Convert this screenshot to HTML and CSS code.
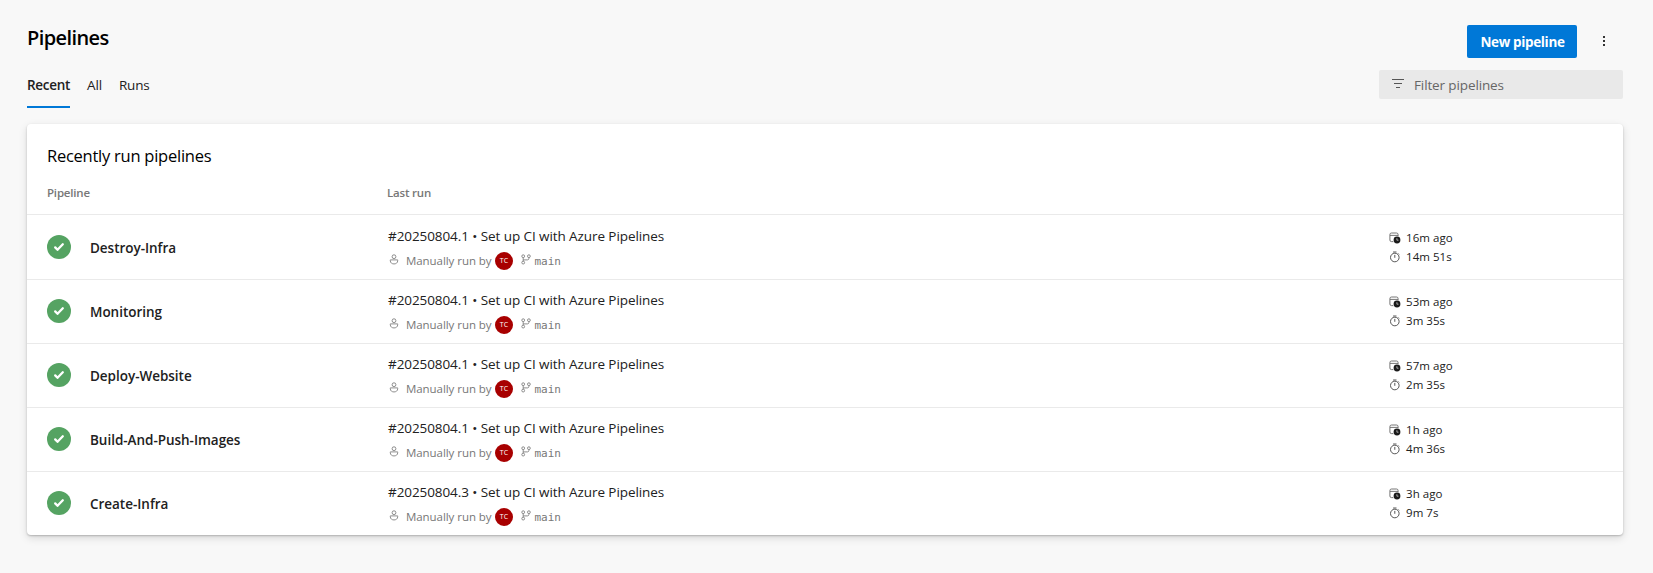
FILE: index.html
```html
<!DOCTYPE html>
<html lang="en">
<head>
<meta charset="utf-8">
<title>Pipelines</title>
<link rel="stylesheet" href="styles.css">
</head>
<body>
<svg class="sprite" width="0" height="0">
  <symbol id="check" viewBox="0 0 24 24"><circle cx="12" cy="12" r="12" fill="#55a362"/><path d="M8.2 12.4l2.3 2.4 5.3-5.5" fill="none" stroke="#fff" stroke-width="2.3" stroke-linecap="round" stroke-linejoin="round"/></symbol>
  <symbol id="person" viewBox="0 0 10 11"><g fill="none" stroke="#808080" stroke-width=".9"><circle cx="5" cy="2.7" r="1.9"/><path d="M1.3 5.9h7.4v.9c0 4.2-7.4 4.2-7.4 0z"/></g></symbol>
  <symbol id="branch" viewBox="0 0 10 11"><g fill="none" stroke="#808080" stroke-width=".9"><circle cx="2.2" cy="2.2" r="1.4"/><circle cx="7.9" cy="2.2" r="1.4"/><circle cx="2.2" cy="8.6" r="1.4"/><path d="M2.2 3.6v3.6M7.9 3.6v.8c0 1-.6 1.5-1.5 1.5H2.2"/></g></symbol>
  <symbol id="calendar" viewBox="0 0 12 12"><rect x=".9" y="1" width="8.2" height="8.6" rx="1.6" fill="none" stroke="#666" stroke-width=".9"/><path d="M1 3.4h8" stroke="#666" stroke-width=".9"/><circle cx="8" cy="8" r="4" fill="#fff"/><circle cx="8" cy="8" r="3.4" fill="#1b1b1b"/><path d="M7.9 6.2v2h1.6" fill="none" stroke="#fff" stroke-width=".6"/></symbol>
  <symbol id="timer" viewBox="0 0 12 12"><g fill="none" stroke="#444" stroke-width=".9"><circle cx="5.8" cy="6.5" r="4.3"/><path d="M4.1 1h3.4M5.8 3.9v2.9M9.1 2.4l1 1"/></g></symbol>
</svg>
<main class="page">
  <header class="top">
    <h1>Pipelines</h1>
    <button class="primary">New pipeline</button>
    <button class="more" aria-label="More"><i></i><i></i><i></i></button>
  </header>
  <div class="bar">
    <nav class="tabs"><a class="tab active">Recent</a><a class="tab">All</a><a class="tab">Runs</a></nav>
    <div class="filter"><svg width="12" height="10" viewBox="0 0 12 10"><path d="M0 .5h12M2 4.5h8M4 8.5h4" stroke="#555" stroke-width="1"/></svg><span>Filter pipelines</span></div>
  </div>
  <section class="card">
    <h2>Recently run pipelines</h2>
    <div class="head"><span class="col-name">Pipeline</span><span>Last run</span></div>
    <div class="row first">
      <div class="name"><svg width="24" height="24"><use href="#check"/></svg><span>Destroy-Infra</span></div>
      <div class="run"><div class="title">#20250804.1 • Set up CI with Azure Pipelines</div><div class="meta"><svg class="person" width="10" height="11"><use href="#person"/></svg><span class="by">Manually run by</span><span class="avatar">TC</span><svg class="branch" width="10" height="11"><use href="#branch"/></svg><span class="ref">main</span></div></div>
      <div class="times"><div><svg width="12" height="12"><use href="#calendar"/></svg>16m ago</div><div><svg width="12" height="12"><use href="#timer"/></svg>14m 51s</div></div>
    </div>
    <div class="row">
      <div class="name"><svg width="24" height="24"><use href="#check"/></svg><span>Monitoring</span></div>
      <div class="run"><div class="title">#20250804.1 • Set up CI with Azure Pipelines</div><div class="meta"><svg class="person" width="10" height="11"><use href="#person"/></svg><span class="by">Manually run by</span><span class="avatar">TC</span><svg class="branch" width="10" height="11"><use href="#branch"/></svg><span class="ref">main</span></div></div>
      <div class="times"><div><svg width="12" height="12"><use href="#calendar"/></svg>53m ago</div><div><svg width="12" height="12"><use href="#timer"/></svg>3m 35s</div></div>
    </div>
    <div class="row">
      <div class="name"><svg width="24" height="24"><use href="#check"/></svg><span>Deploy-Website</span></div>
      <div class="run"><div class="title">#20250804.1 • Set up CI with Azure Pipelines</div><div class="meta"><svg class="person" width="10" height="11"><use href="#person"/></svg><span class="by">Manually run by</span><span class="avatar">TC</span><svg class="branch" width="10" height="11"><use href="#branch"/></svg><span class="ref">main</span></div></div>
      <div class="times"><div><svg width="12" height="12"><use href="#calendar"/></svg>57m ago</div><div><svg width="12" height="12"><use href="#timer"/></svg>2m 35s</div></div>
    </div>
    <div class="row">
      <div class="name"><svg width="24" height="24"><use href="#check"/></svg><span>Build-And-Push-Images</span></div>
      <div class="run"><div class="title">#20250804.1 • Set up CI with Azure Pipelines</div><div class="meta"><svg class="person" width="10" height="11"><use href="#person"/></svg><span class="by">Manually run by</span><span class="avatar">TC</span><svg class="branch" width="10" height="11"><use href="#branch"/></svg><span class="ref">main</span></div></div>
      <div class="times"><div><svg width="12" height="12"><use href="#calendar"/></svg>1h ago</div><div><svg width="12" height="12"><use href="#timer"/></svg>4m 36s</div></div>
    </div>
    <div class="row">
      <div class="name"><svg width="24" height="24"><use href="#check"/></svg><span>Create-Infra</span></div>
      <div class="run"><div class="title">#20250804.3 • Set up CI with Azure Pipelines</div><div class="meta"><svg class="person" width="10" height="11"><use href="#person"/></svg><span class="by">Manually run by</span><span class="avatar">TC</span><svg class="branch" width="10" height="11"><use href="#branch"/></svg><span class="ref">main</span></div></div>
      <div class="times"><div><svg width="12" height="12"><use href="#calendar"/></svg>3h ago</div><div><svg width="12" height="12"><use href="#timer"/></svg>9m 7s</div></div>
    </div>
  </section>
</main>
</body>
</html>
```
FILE: styles.css
```css
* { box-sizing: border-box; }
body { margin: 0; background: #f8f8f8; font-family: "Open Sans", "Noto Sans", sans-serif; font-size: 13.5px; color: #212121; }
button { border: 0; padding: 0; font-family: inherit; }
svg { flex: none; }
.sprite { display: none; }
.page { height: 573px; padding: 0 30px 0 27px; }

.top { display: flex; height: 70px; padding-top: 25px; }
h1 { flex: 1; margin: 0; font-size: 20px; font-weight: 600; line-height: 25px; letter-spacing: -.6px; color: #000; }
.primary { width: 110px; height: 33px; padding-left: 1px; background: #0078d7; color: #fff; font-weight: 700; font-size: 13.5px; letter-spacing: -.35px; border-radius: 2px; }
.more { width: 32px; height: 32px; margin: 0 3px 0 11px; background: none; display: flex; flex-direction: column; align-items: center; justify-content: center; gap: 2px; }
.more i { width: 2px; height: 2px; background: #333; }

.bar { display: flex; justify-content: space-between; height: 54px; }
.tabs { display: flex; gap: 17px; height: 38px; }
.tab { line-height: 30px; letter-spacing: -.15px; }
.tab.active { width: 43px; font-weight: 600; letter-spacing: -.3px; border-bottom: 2px solid #0078d7; }
.filter { display: flex; align-items: center; width: 244px; height: 29px; padding-left: 13px; gap: 10px; background: #e9e9e9; border-radius: 2px; color: #666; letter-spacing: -.12px; }
.filter svg { margin-bottom: 1px; }

.card { height: 411px; background: #fff; border-radius: 4px; box-shadow: 0 1px 2px rgba(0,0,0,.22), 0 3px 8px rgba(0,0,0,.13); }
h2 { height: 45px; margin: 0; padding: 19px 20px 0; font-size: 16.5px; font-weight: 400; line-height: 26px; letter-spacing: -.25px; color: #000; }
.head { display: flex; height: 45px; padding: 14px 20px 0; font-size: 11.5px; font-weight: 600; line-height: 20px; letter-spacing: -.2px; color: #777; }
.col-name { width: 340px; }

.row { display: flex; height: 64px; padding: 0 20px; border-top: 1px solid #eaeaea; }
.row.first { height: 65px; padding-top: 1px; }
.name { display: flex; align-items: center; width: 341px; height: 61px; gap: 19px; font-weight: 600; letter-spacing: -.03px; }
.name span { padding-top: 3px; }
.run { flex: 1; padding-top: 10px; }
.title { line-height: 20px; letter-spacing: -.08px; }
.meta { display: flex; align-items: center; height: 20px; margin-top: 5px; padding-left: 1px; font-size: 11.5px; color: #777; }
.person { margin: -4px 7px 0 0; }
.by { width: 89px; margin-top: -2px; letter-spacing: -.06px; }
.avatar { width: 18px; height: 18px; margin-right: 8px; border-radius: 50%; background: #a80000; color: #fff; font-size: 7px; line-height: 18px; text-align: center; }
.branch { margin: -4px 3.5px 0 0; }
.ref { font-family: "DejaVu Sans Mono", monospace; font-size: 11px; }
.times { width: 214px; padding-top: 12px; font-size: 11.5px; line-height: 19px; letter-spacing: .05px; }
.times div { display: flex; align-items: center; gap: 5px; height: 19px; }
```
